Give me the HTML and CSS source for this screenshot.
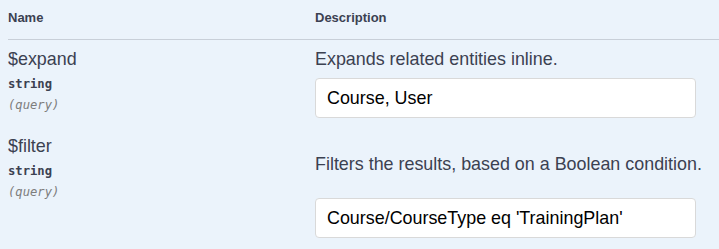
FILE: index.html
```html
<!DOCTYPE html>
<html lang="en">
<head>
  <meta charset="UTF-8" />
  <meta name="viewport" content="width=device-width, initial-scale=1.0" />
  <title>Parameters</title>
  <link rel="stylesheet" href="styles.css">
</head>
<body>
  <div class="params">
    <div class="params-head">
      <div>Name</div>
      <div>Description</div>
    </div>

    <div class="param">
      <div class="param-name">
        <div class="name">$expand</div>
        <div class="type">string</div>
        <div class="in">(query)</div>
      </div>
      <div class="param-desc">
        <div class="desc">Expands related entities inline.</div>
        <input class="value" type="text" value="Course, User" />
      </div>
    </div>

    <div class="param param-filter">
      <div class="param-name">
        <div class="name">$filter</div>
        <div class="type">string</div>
        <div class="in">(query)</div>
      </div>
      <div class="param-desc">
        <div class="desc">Filters the results, based on a Boolean condition.</div>
        <input class="value" type="text" value="Course/CourseType eq 'TrainingPlan'" />
      </div>
    </div>
  </div>
</body>
</html>
```

FILE: styles.css
```css
body {
  margin: 0;
  background-color: #ebf3fb;
  color: #3b4151;
  font-family: 'Liberation Sans', Arial, sans-serif;
}

.params {
  margin-left: 8px;
}

.params-head {
  display: grid;
  grid-template-columns: 307px 1fr;
  padding: 10px 0 14px;
  font-size: 13px;
  line-height: 15px;
  font-weight: bold;
  border-bottom: 1px solid rgba(59, 65, 81, 0.2);
}

.param {
  display: grid;
  grid-template-columns: 307px 1fr;
  padding: 9px 0 9px;
}

.name,
.desc {
  font-size: 17.9px;
  line-height: 20px;
}

.type,
.in {
  font-family: 'DejaVu Sans Mono', 'Liberation Mono', monospace;
  font-size: 12.2px;
  line-height: 14px;
}

.type {
  font-weight: bold;
  margin-top: 8px;
}

.in {
  margin-top: 7px;
  font-style: italic;
  color: #7d7d7d;
}

.value {
  display: block;
  box-sizing: border-box;
  width: 381px;
  height: 40px;
  margin-top: 9px;
  padding: 0 11px;
  font-family: 'Liberation Sans', Arial, sans-serif;
  font-size: 17.9px;
  color: #000;
  background: #fff;
  border: 1px solid #d9d9d9;
  border-radius: 4px;
  outline: none;
}

.param-filter .desc {
  margin-top: 18px;
}

.param-filter .value {
  margin-top: 24px;
}
```
